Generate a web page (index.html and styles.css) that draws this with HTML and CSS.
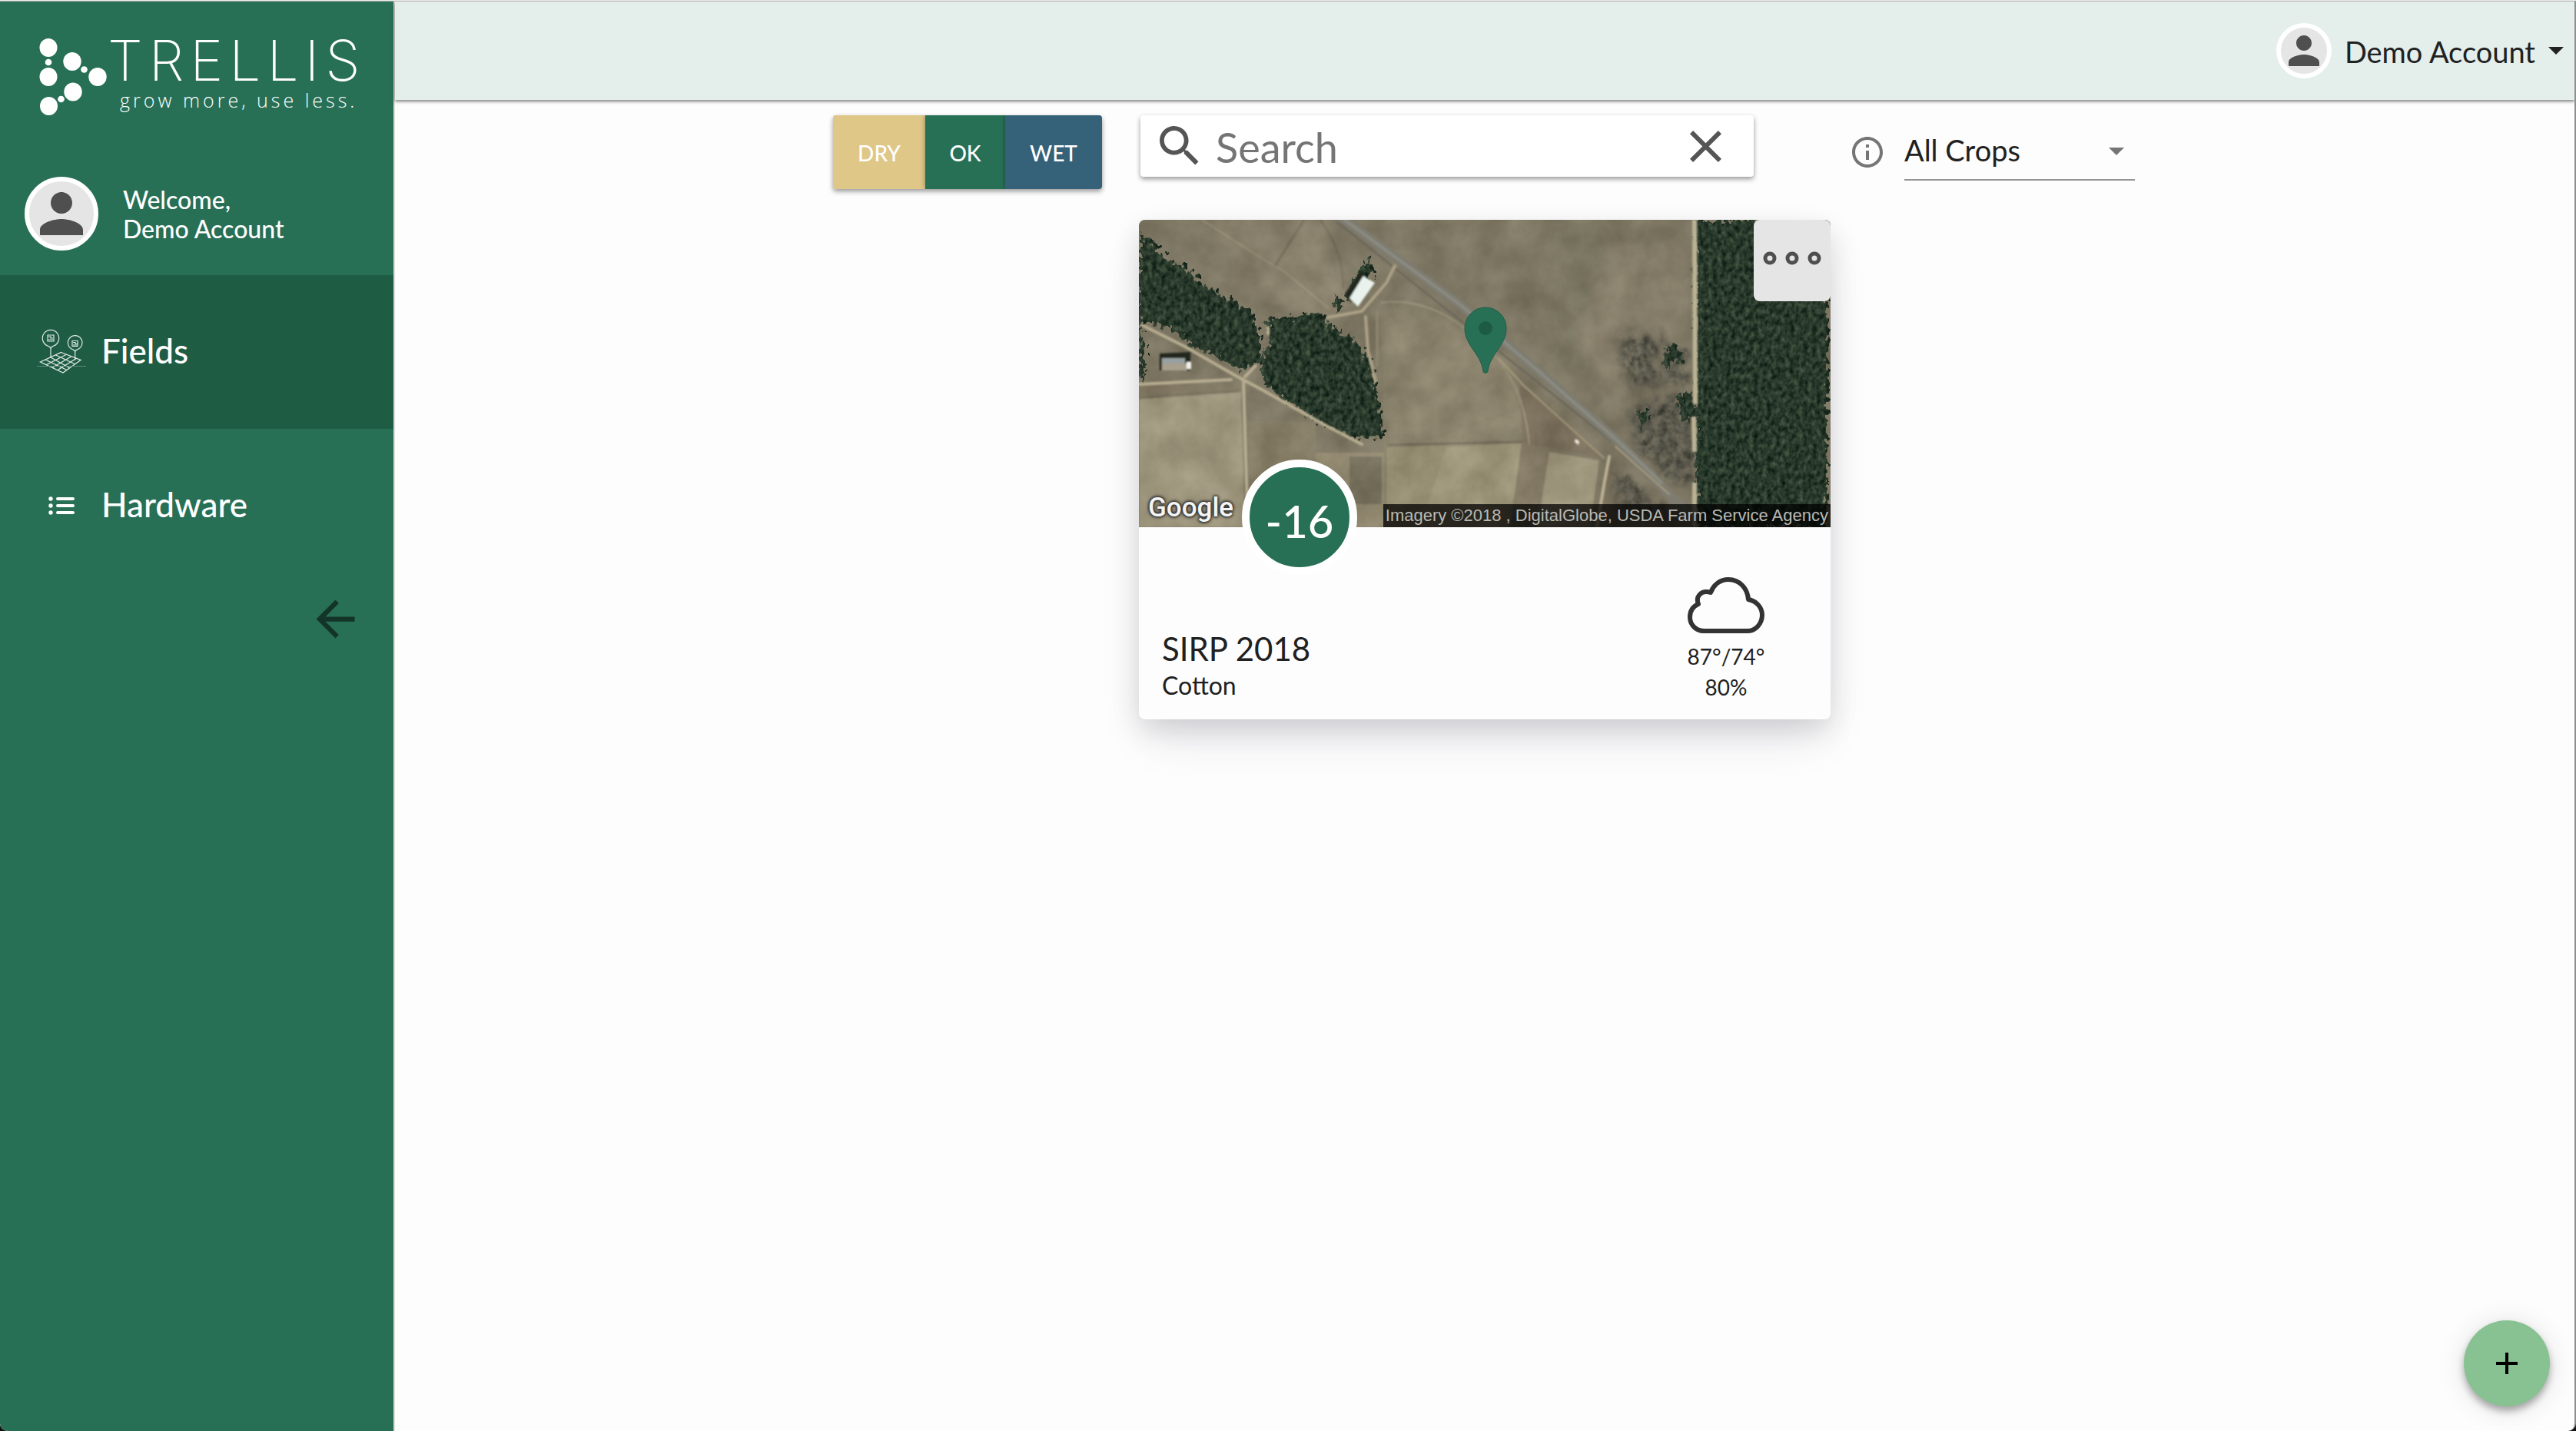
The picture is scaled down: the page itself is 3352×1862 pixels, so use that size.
FILE: index.html
```html
<!DOCTYPE html>
<html lang="en">
<head>
<meta charset="utf-8">
<meta name="viewport" content="width=device-width, initial-scale=1">
<title>Trellis - Fields</title>
<link rel="stylesheet" href="styles.css">
</head>
<body>
<div class="app">
  <aside class="sidebar">
    <a class="brand" href="#" aria-label="Trellis home">
      <svg class="brand-mark" viewBox="0 0 90 102" aria-hidden="true">
        <g fill="#fff">
          <ellipse cx="13" cy="12" rx="11.5" ry="12"/><ellipse cx="13" cy="50" rx="11.5" ry="12"/><ellipse cx="13.500" cy="88" rx="11.500" ry="12"/>
          <ellipse cx="44" cy="30" rx="11.700" ry="12"/><ellipse cx="77" cy="50" rx="11.700" ry="12"/><ellipse cx="45" cy="69.500" rx="11.700" ry="12"/>
          <circle cx="13" cy="31" r="4.300"/><circle cx="59.500" cy="40.500" r="4.300"/><circle cx="29.500" cy="79" r="4.300"/>
        </g>
      </svg>
      <span class="brand-words">
        <span class="brand-name">TRELLIS</span>
        <span class="brand-tag">grow more, use less.</span>
      </span>
    </a>
    <div class="welcome">
      <span class="avatar avatar-large">
        <svg viewBox="0 0 24 24" aria-hidden="true"><path fill="#4f4f4f" d="M12 12c2.210 0 4-1.790 4-4s-1.790-4-4-4-4 1.790-4 4 1.790 4 4 4zm0 2c-2.670 0-8 1.340-8 4v2h16v-2c0-2.660-5.330-4-8-4z"/></svg>
      </span>
      <p class="welcome-text">Welcome,<br>Demo Account</p>
    </div>
    <nav class="nav">
      <a class="nav-item active" href="#">
        <svg class="nav-icon" viewBox="0 0 64 64" fill="none" stroke="#dfeae5" aria-hidden="true">
          <g stroke-width="1.200">
            <path d="M18 25.500c-1-2.500-2-2.700-3.500-3.300a10.700 10.700 0 1 1 7 0c-1.500.6-2.500.8-3.500 3.300v12M49.700 29.500c-.8-2-1.700-2.200-3-2.800a9.300 9.300 0 1 1 6 0c-1.300.6-2.200.8-3 2.800v11"/>
            <path d="M14 8h8v8h-8zM15 10h3v2h3M15 14h6M46 15.500h7v7h-7zM47 17.500h3v2h3M47 21h5"/>
          </g>
          <path stroke-width="1.300" d="M31.500 30.500 57 40.500 34 57 4.500 43zM24.500 34l25.700 12M18 37l25 14M11 40l28 13.500M38 33.500 12.500 46.500M44.500 36 20 50.500M51 38.500 27 53.500"/>
          <path stroke="#5d8a76" stroke-width="1" d="M0 48.500h64"/>
        </svg>
        <span class="nav-label">Fields</span>
      </a>
      <a class="nav-item" href="#">
        <svg class="nav-icon" viewBox="0 0 64 64" stroke="#fff" stroke-width="4" stroke-linecap="round" fill="#fff" aria-hidden="true">
          <path d="M27 21h20M27 30h20M27 39h20"/>
          <g stroke="none"><circle cx="18" cy="21" r="2.700"/><circle cx="18" cy="30" r="2.700"/><circle cx="18" cy="39" r="2.700"/></g>
        </svg>
        <span class="nav-label">Hardware</span>
      </a>
    </nav>
    <button class="collapse" type="button" aria-label="Collapse menu">
      <svg viewBox="0 0 24 24" aria-hidden="true"><path fill="#143429" d="M20 11H7.830l5.590-5.590L12 4l-8 8 8 8 1.410-1.410L7.830 13H20v-2z"/></svg>
    </button>
  </aside>

  <div class="page">
    <header class="topbar">
      <button class="account" type="button">
        <span class="avatar">
          <svg viewBox="0 0 24 24" aria-hidden="true"><path fill="#4f4f4f" d="M12 12c2.210 0 4-1.790 4-4s-1.790-4-4-4-4 1.790-4 4 1.790 4 4 4zm0 2c-2.670 0-8 1.340-8 4v2h16v-2c0-2.660-5.330-4-8-4z"/></svg>
        </span>
        <span class="account-name">Demo Account</span>
        <svg class="caret" viewBox="0 0 20 10" aria-hidden="true"><path fill="#212121" d="M0 0h20L10 10z"/></svg>
      </button>
    </header>

    <main class="content">
      <div class="toolbar">
        <div class="status-filter" role="group" aria-label="Moisture status">
          <button class="dry" type="button">DRY</button>
          <button class="ok" type="button">OK</button>
          <button class="wet" type="button">WET</button>
        </div>
        <div class="search">
          <svg class="search-icon" viewBox="3 3 18 18" aria-hidden="true"><path fill="#555" d="M15.500 14h-.79l-.28-.27C15.410 12.590 16 11.110 16 9.500 16 5.910 13.090 3 9.500 3S3 5.910 3 9.500 5.910 16 9.500 16c1.610 0 3.090-.59 4.230-1.570l.27.28v.79l5 4.990L20.490 19l-4.990-5zm-6 0C7.010 14 5 11.990 5 9.500S7.010 5 9.500 5 14 7.010 14 9.500 11.990 14 9.500 14z"/></svg>
          <input type="text" placeholder="Search" aria-label="Search">
          <button class="clear" type="button" aria-label="Clear search">
            <svg viewBox="5 5 14 14" aria-hidden="true"><path fill="#555" d="M19 6.410 17.590 5 12 10.590 6.410 5 5 6.410 10.590 12 5 17.590 6.410 19 12 13.410 17.590 19 19 17.590 13.410 12z"/></svg>
          </button>
        </div>
        <div class="crops">
          <svg class="info-icon" viewBox="2 2 20 20" aria-hidden="true"><path fill="#757575" d="M11 17h2v-6h-2v6zm1-15C6.480 2 2 6.480 2 12s4.480 10 10 10 10-4.480 10-10S17.520 2 12 2zm0 18c-4.410 0-8-3.590-8-8s3.590-8 8-8 8 3.590 8 8-3.590 8-8 8zM11 9h2V7h-2v2z"/></svg>
          <div class="select">
            <select aria-label="Crop">
              <option>All Crops</option>
              <option>Cotton</option>
            </select>
            <svg class="caret" viewBox="0 0 20 10" aria-hidden="true"><path fill="#757575" d="M0 0h20L10 10z"/></svg>
          </div>
        </div>
      </div>

      <article class="card">
        <div class="map">
          <svg class="map-image" viewBox="0 0 900 400" preserveAspectRatio="xMidYMid slice" role="img" aria-label="Satellite view of the field">
            <defs>
              <filter id="trees" x="-5%" y="-5%" width="110%" height="110%" color-interpolation-filters="sRGB">
                <feTurbulence type="fractalNoise" baseFrequency=".17 .13" numOctaves="2" seed="4" result="n"/>
                <feDisplacementMap in="SourceGraphic" in2="n" scale="22" xChannelSelector="R" yChannelSelector="G" result="edge"/>
                <feColorMatrix in="n" values=".36 0 0 0 -.020  .36 0 0 0 .045  .30 0 0 0 .020  0 0 0 0 1" result="leaf"/>
                <feComposite in="leaf" in2="edge" operator="in"/>
              </filter>
              <filter id="brush" x="-20%" y="-20%" width="140%" height="140%" color-interpolation-filters="sRGB">
                <feTurbulence type="fractalNoise" baseFrequency=".09" numOctaves="3" seed="12" result="n"/>
                <feDisplacementMap in="SourceGraphic" in2="n" scale="40" xChannelSelector="R" yChannelSelector="G" result="edge"/>
                <feGaussianBlur in="edge" stdDeviation="4" result="blurred"/>
                <feColorMatrix in="n" values=".3 0 0 0 .17  .3 0 0 0 .165  .27 0 0 0 .140  0 1.600 0 0 0" result="leaf"/>
                <feComposite in="leaf" in2="blurred" operator="in"/>
              </filter>
              <filter id="soil" x="0" y="0" width="100%" height="100%" color-interpolation-filters="sRGB">
                <feTurbulence type="fractalNoise" baseFrequency=".025" numOctaves="5" seed="9"/>
                <feColorMatrix values=".4 0 0 0 .31  .4 0 0 0 .290  .38 0 0 0 .220  0 0 0 0 .36"/>
              </filter>
              <filter id="soft" x="-20%" y="-20%" width="140%" height="140%"><feGaussianBlur stdDeviation="1"/></filter>
              <filter id="haze" x="-30%" y="-30%" width="160%" height="160%"><feGaussianBlur stdDeviation="7"/></filter>
            </defs>
            <path fill="#7c7461" d="M0 0h900v400H0z"/>
            <g filter="url(#haze)">
              <path fill="#8a806c" d="M90 0h140l40 100-20 40-120-50z"/>
              <path fill="#8d836e" d="M180 50 240 0l20 90-40 10z"/>
              <path fill="#91876f" d="M315 110l130 30 60 90-20 70H325z"/>
              <path fill="#77735f" d="M540 0h60v200h-60z"/>
              <path fill="#877d69" d="M620 30h90v110l-110 90-30-80z"/>
            </g>
            <g filter="url(#soft)">
              <path fill="#aba286" d="M0 232l133-8 5 176H0z"/>
              <path fill="#7b705b" d="M0 215h132v9L0 233z"/>
              <path fill="#857a63" d="M143 262l87 1v50h-5v87h-80z"/>
              <path fill="#988d72" d="M230 303h90v97h-90z"/>
              <path fill="#706b57" d="M274 308h42v62h-42z"/>
              <path fill="#a09677" d="M322 296l176-5-14 109H322z"/>
              <path fill="#aca383" d="M400 296l98-5-10 70-22 39h-100z"/>
              <path fill="#827662" d="M498 290h36l-15 110h-36z"/>
              <path fill="#aba184" d="M534 302l65 11-12 87h-68z"/>
              <path fill="#766956" d="M495 215l30 20 80 75-105-20z"/>
              <path fill="#7b705b" d="M612 312l90 88H598z"/>
              <path fill="none" stroke="#a69b80" stroke-width="2" d="M82 0 150 44 190 68 248 116M315 108q60-8 115 38 70 50 78 146"/>
              <path fill="none" stroke="#6f6654" stroke-width="3" d="M0 232l130-9M215 0l-38 60M236 0q30 40 30 90M324 293l175-4"/>
              <path fill="none" stroke="#8b816b" stroke-width="2" d="M320 160v240M375 286l120-40"/>
            </g>
            <path filter="url(#soil)" d="M0 0h900v400H0z"/>
            <g filter="url(#brush)">
              <path d="M622 148l54-5v60l10 12-45 5-14-30zM683 165h30v48h-24zM645 240l75-15 5 70v60l-40-20-45-45z"/>
              <path d="M612 316l85 72-72-8z"/>
            </g>
            <g filter="url(#trees)">
              <path d="M0 20 15 25 35 50 60 62 82 82 105 96 145 118 157 152 160 188 132 194 66 162 40 140 6 132 0 206z"/>
              <path d="M160 184 170 160 166 130 236 120 250 138 282 156 300 182 313 242 318 282 280 284 230 262 163 214z"/>
              <path d="M725 0h171v400H725z"/>
              <path d="M697 228l22-3 8 32-20 6zM687 166l10-3 12 18-5 8-10-12-2 18-10-8zM650 250l12-4 2 16-12 8z"/>
              <path d="M292 55l8-4 6 20-10 8-20 28-8-6zM258 98l8 12-6 8-8-12zM0 160h8v48H0z"/>
            </g>
            <g fill="none" stroke-linecap="round" filter="url(#soft)">
              <path stroke="#67645a" stroke-width="2" d="M258 3 640 308"/>
              <path stroke="#7e7c71" stroke-width="12" d="M262-4 420 112 520 197 620 285 710 378"/>
              <path stroke="#8b8b81" stroke-width="4" d="M262-4 420 112 520 197 620 285 680 342"/>
              <path stroke="#a69b7d" stroke-width="2" d="M468 180 500 215 605 310M620 295l70 62"/>
              <path stroke="#b8ad91" stroke-width="4" d="M4 137 60 165 128 204 160 221 240 266 290 292M0 214l120-6M136 210l3 100 3 90M138 204 152 190M168 148v-8"/>
              <path stroke="#ada286" stroke-width="4" d="M333 60 322 82 290 119 246 127M295 126 298 170 308 210"/>
              <path stroke="#918770" stroke-width="3" d="M310 120v70"/>
              <path stroke="#bcb395" stroke-width="6" stroke-linecap="butt" d="M723 0 724 240M722 256l1 46M723 342v58"/>
              <path stroke="#bdb395" stroke-width="4" d="M612 308 606 340 596 400"/>
            </g>
            <g filter="url(#soft)">
              <path fill="#20261f" d="M268 96l22-30 6 8-20 34zM27 174l40-2v24H27z"/>
              <path fill="#e9f2ec" d="M292 73l15 9-22 31-11-11z"/>
              <path fill="#98a0a0" d="M30 180h30v8H30z"/><path fill="#a89f8d" d="M30 187h32v9H30z"/><path fill="#f1f3ee" d="M62 185h6v9h-6z"/>
              <path fill="#eeeade" d="M568 285l5 3-1 5-5-4z"/>
            </g>
            <path fill="#277056" stroke="#1f5c46" d="M451 114a27 27 0 0 0-27 27c0 23 21 33 24 56 0 3 6 3 6 0 3-23 24-33 24-56a27 27 0 0 0-27-27z"/>
            <circle cx="451" cy="141" r="9" fill="#1e5b43"/>
          </svg>
          <button class="card-menu" type="button" aria-label="Field options">
            <svg viewBox="0 0 76 18" fill="none" stroke="#4f4f4f" stroke-width="5" aria-hidden="true"><circle cx="9" cy="9" r="6"/><circle cx="38" cy="9" r="6"/><circle cx="67" cy="9" r="6"/></svg>
          </button>
          <span class="map-logo">Google</span>
          <span class="map-credit">Imagery ©2018 , DigitalGlobe, USDA Farm Service Agency</span>
          <span class="badge">-16</span>
        </div>
        <div class="card-body">
          <div class="field">
            <h2>SIRP 2018</h2>
            <p>Cotton</p>
          </div>
          <div class="weather">
            <svg class="cloud" viewBox="0 0 100 74" aria-hidden="true"><path fill="none" stroke="#333" stroke-width="6" stroke-linejoin="round" d="M21 70C10 70 3 61 3 52 3 44 7 38 14 35 10 25 18 16 30 20 34 9 43 3 53 3 68 3 78 15 79 29 90 31 97 40 97 49 97 61 88 70 78 70Z"/></svg>
            <span>87°/74°</span>
            <span>80%</span>
          </div>
        </div>
      </article>
    </main>
    <button class="fab" type="button" aria-label="Add field">
      <svg viewBox="0 0 28 28" aria-hidden="true"><path stroke="#000" stroke-width="4" d="M14 0v28M0 14h28"/></svg>
    </button>
  </div>
</div>
</body>
</html>
```
FILE: styles.css
```css
* {
  box-sizing: border-box;
}

body {
  display: flex;
  flex-direction: column;
  min-height: 100vh;
  margin: 0;
  background: #111;
  color: #212121;
  font-family: Lato, "Liberation Sans", sans-serif;
  font-size: 38px;
}

body::before {
  content: "";
  height: 1px;
  background: #ececec;
}

h2,
p {
  margin: 0;
  font-weight: 400;
}

button,
input,
select {
  margin: 0;
  padding: 0;
  border: 0;
  background: none;
  color: inherit;
  font: inherit;
}

button {
  cursor: pointer;
}

a {
  color: inherit;
  text-decoration: none;
}

svg {
  display: block;
}

.app {
  display: flex;
  flex: 1;
  border-top: 1px solid #b2b2b2;
  border-right: 2px solid #8e8e8e;
  border-radius: 0 0 10px 10px;
  background: #fdfdfd;
  overflow: hidden;
}

/* Sidebar */

.sidebar {
  flex: none;
  width: 514px;
  border-right: 2px solid #dcdcdc;
  background: #277056;
  color: #fff;
}

.brand {
  display: flex;
  padding: 48px 0 0 50px;
  height: 228px;
}

.brand-mark {
  flex: none;
  width: 90px;
  height: 102px;
}

.brand-words {
  display: flex;
  flex-direction: column;
}

.brand-name {
  font-family: Inter, sans-serif;
  font-size: 73px;
  font-weight: 200;
  line-height: 58px;
  letter-spacing: 8px;
}

.brand-tag {
  padding: 4px 0 0 16px;
  font-family: "Open Sans", sans-serif;
  font-size: 25px;
  font-weight: 300;
  line-height: 36px;
  letter-spacing: 4px;
  white-space: nowrap;
}

.welcome {
  display: flex;
  gap: 32px;
  height: 128px;
  padding-left: 32px;
}

.avatar {
  display: block;
  flex: none;
  width: 72px;
  height: 72px;
  border: 6px solid #fff;
  border-radius: 50%;
  background: #e5e5e5;
}

.avatar-large {
  width: 96px;
  height: 96px;
}

.welcome-text {
  padding-top: 11px;
  font-size: 32px;
  font-weight: 500;
  line-height: 38px;
}

.nav-item {
  display: flex;
  align-items: center;
  gap: 20px;
  height: 200px;
  padding: 4px 0 0 48px;
  font-size: 44px;
  font-weight: 500;
}

.nav-item.active {
  background: #1f5c44;
}

.nav-label {
  padding-bottom: 8px;
}

.nav-icon {
  width: 64px;
  height: 64px;
}

.collapse {
  display: block;
  width: 75px;
  height: 75px;
  margin: 10px 38px 0 auto;
}

/* Header */

.page {
  display: flex;
  flex: 1;
  flex-direction: column;
  min-width: 0;
}

.topbar {
  display: flex;
  justify-content: flex-end;
  align-items: center;
  height: 128px;
  padding-right: 14px;
  background: #e4eeea;
  box-shadow: 0 2px 4px rgba(0, 0, 0, .5);
}

.account {
  display: flex;
  align-items: center;
  gap: 17px;
}

.account-name {
  padding-top: 2px;
}

.caret {
  width: 20px;
  height: 10px;
}

/* Toolbar */

.content {
  display: flex;
  flex-direction: column;
  align-items: center;
  gap: 40px;
  padding-top: 20px;
}

.toolbar {
  display: flex;
  align-items: flex-start;
  height: 96px;
  padding-right: 2px;
}

.status-filter {
  display: flex;
  height: 96px;
  margin-right: 50px;
  border-radius: 4px;
  color: #fff;
  font-size: 28px;
  font-weight: 500;
  box-shadow: 0 3px 6px rgba(0, 0, 0, .4);
  overflow: hidden;
}

.status-filter button {
  padding: 2px 0 0;
  box-shadow: 0 0 6px rgba(0, 0, 0, .4);
}

.status-filter .dry {
  width: 120px;
  background: #dfc788;
}

.status-filter .ok {
  width: 104px;
  background: #277056;
}

.status-filter .wet {
  width: 126px;
  background: #356279;
}

.search {
  display: flex;
  align-items: center;
  width: 798px;
  height: 80px;
  margin-right: 128px;
  padding: 0 42px 0 25px;
  border-radius: 4px;
  background: #fff;
  box-shadow: 0 3px 6px rgba(0, 0, 0, .4);
}

.search-icon {
  flex: none;
  width: 52px;
  height: 52px;
}

.search input {
  flex: 1;
  min-width: 0;
  height: 80px;
  padding: 2px 20px 0 21px;
  font-size: 54px;
  outline: 0;
}

.search input::placeholder {
  color: #757575;
  opacity: 1;
}

.clear svg {
  width: 41px;
  height: 41px;
}

.crops {
  display: flex;
  align-items: center;
  gap: 28px;
  height: 96px;
}

.info-icon {
  width: 40px;
  height: 40px;
}

.select {
  display: grid;
  align-items: center;
  width: 300px;
  height: 74px;
  border-bottom: 2px solid #949494;
}

.select select {
  grid-area: 1 / 1;
  width: 100%;
  height: 56px;
  padding-bottom: 4px;
  appearance: none;
}

.select .caret {
  grid-area: 1 / 1;
  justify-self: end;
  margin-right: 14px;
  pointer-events: none;
}

/* Field card */

.card {
  width: 900px;
  border-radius: 8px;
  background: #fdfdfd;
  box-shadow: 0 30px 60px -12px rgba(50, 50, 93, .12), 0 14px 36px rgba(0, 0, 0, .13);
}

.map {
  position: relative;
  height: 400px;
}

.map-image {
  width: 100%;
  height: 100%;
  border-radius: 8px 8px 0 0;
}

.card-menu {
  position: absolute;
  top: 0;
  right: 0;
  width: 100px;
  height: 106px;
  padding: 0 12px 6px;
  border-radius: 8px;
  background: #e5e5e5;
}

.map-logo {
  position: absolute;
  bottom: 0;
  left: 12px;
  color: #f4f4f4;
  font-family: Roboto, sans-serif;
  font-size: 35px;
  font-weight: 500;
  line-height: 50px;
  text-shadow: 0 0 3px #333, 0 0 3px #333, 0 0 4px #333, 0 0 5px #333;
}

.map-credit {
  position: absolute;
  right: 0;
  bottom: 0;
  padding: 0 3px;
  background: rgba(0, 0, 0, .75);
  color: #b9b9b5;
  font-family: "Liberation Sans", sans-serif;
  font-size: 22px;
  line-height: 30px;
  white-space: nowrap;
}

.badge {
  position: absolute;
  bottom: -62px;
  left: 134px;
  width: 150px;
  height: 150px;
  padding-top: 5px;
  border: 10px solid #fff;
  border-radius: 50%;
  background: #277056;
  color: #fff;
  font-size: 58px;
  font-weight: 500;
  line-height: 130px;
  text-align: center;
}

.card-body {
  display: flex;
  justify-content: space-between;
  align-items: flex-end;
  height: 250px;
  padding: 0 76px 22px 30px;
}

.field h2 {
  font-size: 42px;
  line-height: 52px;
}

.field p {
  font-size: 32px;
  line-height: 44px;
}

.weather {
  display: flex;
  flex-direction: column;
  align-items: center;
  width: 120px;
  font-size: 28px;
  line-height: 40px;
}

.cloud {
  width: 100px;
  height: 74px;
  margin-bottom: 9px;
}

.fab {
  display: grid;
  place-items: center;
  width: 112px;
  height: 112px;
  margin: auto 32px 32px auto;
  border-radius: 50%;
  background: #89c292;
  box-shadow: 0 6px 10px rgba(0, 0, 0, .3), 0 4px 36px rgba(0, 0, 0, .12);
}

.fab svg {
  width: 28px;
  height: 28px;
}
```
